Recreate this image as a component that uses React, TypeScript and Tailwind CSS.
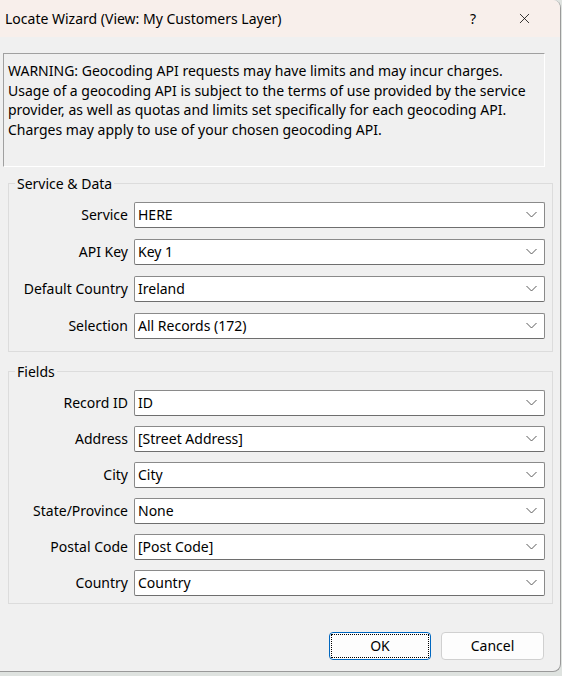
import { X } from "lucide-react";

const serviceRows = [
  { label: "Service", value: "HERE" },
  { label: "API Key", value: "Key 1" },
  { label: "Default Country", value: "Ireland" },
  { label: "Selection", value: "All Records (172)" },
];

const fieldRows = [
  { label: "Record ID", value: "ID" },
  { label: "Address", value: "[Street Address]" },
  { label: "City", value: "City" },
  { label: "State/Province", value: "None" },
  { label: "Postal Code", value: "[Post Code]" },
  { label: "Country", value: "Country" },
];

function Chevron() {
  return (
    <svg width="11" height="7" viewBox="0 0 11 7" className="text-[#5a5a5a]">
      <path d="M0.5 1 L5.5 6 L10.5 1" fill="none" stroke="currentColor" strokeWidth="1" />
    </svg>
  );
}

function Combo({ label, value }: { label: string; value: string }) {
  return (
    <div className="flex items-center h-[26px]">
      <div className="w-[125px] pr-[6px] text-right whitespace-nowrap">{label}</div>
      <div className="flex items-center w-[411px] h-[26px] bg-white border border-[#8a8a8a] border-b-[#6e6e6e] rounded-[2px] pl-[3px] pr-[7px]">
        <span className="flex-1 whitespace-nowrap">{value}</span>
        <Chevron />
      </div>
    </div>
  );
}

export default function App() {
  return (
    <div
      className="w-[562px] h-[676px] bg-[#dfe3e0] text-[14px] text-[#000] leading-[19.5px]"
      style={{ fontFamily: '"Noto Sans", "Open Sans", sans-serif' }}
    >
      <div className="w-[561px] h-[672px] flex flex-col bg-[#f0f0f0] border-r border-b border-[#9a9a9a] rounded-tr-[8px] rounded-br-[8px] overflow-hidden">
        {/* Title bar */}
        <div className="h-[37px] flex items-center bg-[#f8efeb] pl-[5px]">
          <span className="flex-1">Locate Wizard (View: My Customers Layer)</span>
          <span className="w-[46px] text-center">?</span>
          <span className="w-[64px] flex justify-center pr-[8px]">
            <X size={17} strokeWidth={1.1} />
          </span>
        </div>

        {/* Warning */}
        <div className="mt-[16px] ml-[3px] w-[542px] h-[114px] border border-t-[#a0a0a0] border-l-[#a0a0a0] border-r-white border-b-white px-[4px] pt-[7px]">
          WARNING: Geocoding API requests may have limits and may incur charges. Usage of a geocoding API is subject to the terms of use provided by the service provider, as well as quotas and limits set specifically for each geocoding API. Charges may apply to use of your chosen geocoding API.
        </div>

        {/* Service & Data */}
        <fieldset className="mt-[7px] ml-[8px] w-[545px] h-[178px] border border-[#dcdcdc] pt-[8px]">
          <legend className="ml-[6px] px-[2px]">Service &amp; Data</legend>
          <div className="flex flex-col gap-[11px]">
            {serviceRows.map((r) => (
              <Combo key={r.label} label={r.label} value={r.value} />
            ))}
          </div>
        </fieldset>

        {/* Fields */}
        <fieldset className="mt-[10px] ml-[8px] w-[545px] h-[242px] border border-[#dcdcdc] pt-[8px]">
          <legend className="ml-[6px] px-[2px]">Fields</legend>
          <div className="flex flex-col gap-[10px]">
            {fieldRows.map((r) => (
              <Combo key={r.label} label={r.label} value={r.value} />
            ))}
          </div>
        </fieldset>

        {/* Buttons */}
        <div className="flex justify-end gap-[10px] mt-[28px] pr-[16px]">
          <button className="w-[102px] h-[28px] bg-[#fdfdfd] border border-[#0067c0] rounded-[4px] p-[1px]">
            <span className="flex items-center justify-center w-full h-full border border-dotted border-black">OK</span>
          </button>
          <button className="w-[103px] h-[28px] bg-[#fdfdfd] border border-[#d0d0d0] rounded-[4px]">Cancel</button>
        </div>
      </div>
    </div>
  );
}
